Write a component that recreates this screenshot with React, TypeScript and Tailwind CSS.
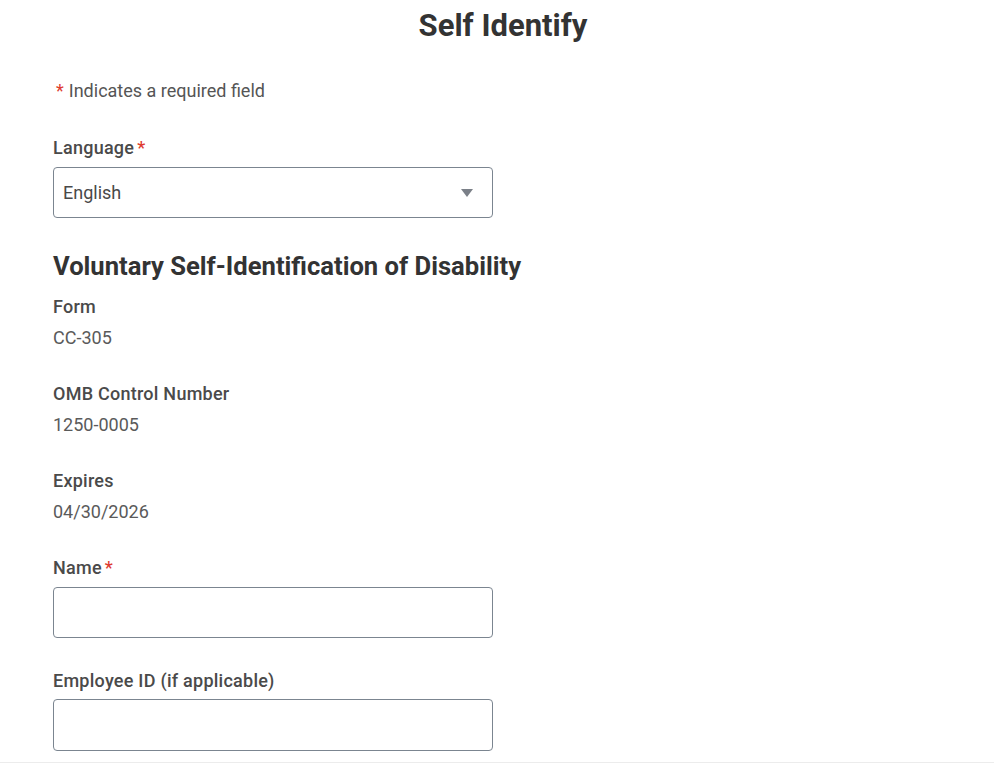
import React from "react";

export default function App() {
  return (
    <div className="min-h-[770px] w-[994px] bg-white font-['Roboto',sans-serif] flex flex-col">
      <div className="flex-1 flex flex-col">
        <h1 className="mt-[6px] ml-[12px] text-center text-[31px] leading-[40px] font-bold text-[#333333]">Self Identify</h1>
        <div className="pl-[53px] flex flex-col">
          <p className="mt-[33px] text-[18px] leading-[24px] text-[#555555]">
            <span className="text-[#de3b2f] ml-[3px] mr-[5px]">*</span>Indicates a required field
          </p>
          <label className="mt-[33px] text-[18px] leading-[24px] font-medium tracking-[0.25px] text-[#4a4a4a]">
            Language<span className="text-[#de3b2f] ml-[3px]">*</span>
          </label>
          <div className="mt-[7px] w-[440px] h-[51px] border border-[#7b8590] rounded-[4px] flex items-center justify-between px-[9px]">
            <span className="text-[18px] text-[#494949]">English</span>
            <svg width="14" height="10" viewBox="0 0 14 10" className="mr-[9px]">
              <path d="M1 1 L13 1 L7 9 Z" fill="#7b8088" />
            </svg>
          </div>
          <h2 className="mt-[32px] text-[25.6px] leading-[32px] font-bold text-[#333333]">
            Voluntary Self-Identification of Disability
          </h2>
          <div className="mt-[13px] text-[18px] leading-[24px] font-medium tracking-[0.25px] text-[#4a4a4a]">Form</div>
          <div className="mt-[7px] text-[18px] leading-[24px] text-[#5a5a5a]">CC-305</div>
          <div className="mt-[32px] text-[18px] leading-[24px] font-medium tracking-[0.25px] text-[#4a4a4a]">OMB Control Number</div>
          <div className="mt-[7px] text-[18px] leading-[24px] text-[#5a5a5a]">1250-0005</div>
          <div className="mt-[32px] text-[18px] leading-[24px] font-medium tracking-[0.25px] text-[#4a4a4a]">Expires</div>
          <div className="mt-[7px] text-[18px] leading-[24px] text-[#5a5a5a]">04/30/2026</div>
          <label className="mt-[32px] text-[18px] leading-[24px] font-medium tracking-[0.25px] text-[#4a4a4a]">
            Name<span className="text-[#de3b2f] ml-[3px]">*</span>
          </label>
          <div className="mt-[7px] w-[440px] h-[51px] border border-[#7b8590] rounded-[4px]" />
          <label className="mt-[31px] text-[18px] leading-[24px] font-medium tracking-[0.25px] text-[#4a4a4a]">
            Employee ID (if applicable)
          </label>
          <div className="mt-[6px] w-[440px] h-[52px] border border-[#7b8590] rounded-[4px]" />
        </div>
      </div>
      <div className="mt-[11px] h-[1px] bg-[#ececec] w-full" />
      <div className="h-[7px]" />
    </div>
  );
}
